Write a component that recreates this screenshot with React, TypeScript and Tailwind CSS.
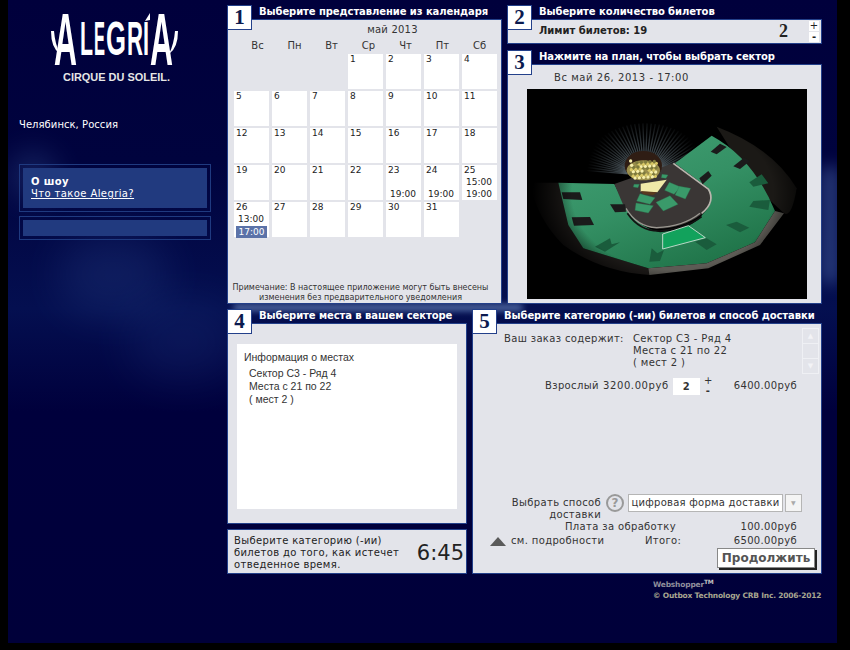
const verdana = "font-['DejaVu_Sans',sans-serif]";

const days = ['Вс', 'Пн', 'Вт', 'Ср', 'Чт', 'Пт', 'Сб'];

const cells: { day?: number; times?: string[]; selected?: boolean }[] = [
  {}, {}, {},
  { day: 1 }, { day: 2 }, { day: 3 }, { day: 4 },
  { day: 5 }, { day: 6 }, { day: 7 }, { day: 8 }, { day: 9 }, { day: 10 }, { day: 11 },
  { day: 12 }, { day: 13 }, { day: 14 }, { day: 15 }, { day: 16 }, { day: 17 }, { day: 18 },
  { day: 19 }, { day: 20 }, { day: 21 }, { day: 22 },
  { day: 23, times: ['', '19:00'] }, { day: 24, times: ['', '19:00'] }, { day: 25, times: ['15:00', '19:00'] },
  { day: 26, times: ['13:00', '17:00'], selected: true },
  { day: 27 }, { day: 28 }, { day: 29 }, { day: 30 }, { day: 31 },
];

const rays = Array.from({ length: 46 }, (_, i) => {
  const a = Math.PI * (1.03 + (i / 45) * 0.94);
  return {
    x1: 375 + Math.cos(a) * 50,
    y1: 270 + Math.sin(a) * 35,
    x2: 375 + Math.cos(a) * 190,
    y2: 270 + Math.sin(a) * 155,
  };
});

const speckles = Array.from({ length: 48 }, (_, i) => ({
  x: 332 + ((i * 37) % 80),
  y: 228 + ((i * 23) % 52),
  c: i % 3 === 0 ? '#f6efac' : i % 3 === 1 ? '#7d7a3d' : '#d8c866',
}));

// bold Liberation Sans advance widths at 50px, used to squeeze the logo letters
const logoLetters = [
  { ch: 'A', x: 5, w: 23, h: 53, base: 54, adv: 36.1 },
  { ch: 'L', x: 31, w: 13, h: 35, base: 44, adv: 30.5 },
  { ch: 'E', x: 45, w: 11, h: 35, base: 44, adv: 33.4 },
  { ch: 'G', x: 57, w: 20, h: 35, base: 44, adv: 38.9 },
  { ch: 'R', x: 78, w: 16, h: 35, base: 44, adv: 36.1 },
  { ch: 'I', x: 94, w: 6, h: 35, base: 44, adv: 13.9 },
  { ch: 'A', x: 101, w: 23, h: 53, base: 54, adv: 36.1 },
];

function Badge({ n }: { n: number }) {
  return (
    <div className="absolute left-0 top-0 z-10 flex h-[25px] w-[25px] items-center justify-center border border-[#23408a] bg-white font-['Liberation_Serif',serif] text-[21px] font-bold leading-none text-[#0b1a4f]">
      {n}
    </div>
  );
}

function Panel({ n, title, className, children }: { n: number; title: string; className: string; children: React.ReactNode }) {
  return (
    <section className={`relative flex flex-col ${className}`}>
      <Badge n={n} />
      <h2 className="ml-[32px] h-[14px] text-[10px] font-bold leading-[14px] -tracking-[0.08px] whitespace-nowrap text-white">{title}</h2>
      <div className="flex min-h-0 flex-1 flex-col border border-[#23408a] bg-[#e3e4ea] text-[#222]">{children}</div>
    </section>
  );
}

function StagePlan() {
  return (
    <svg viewBox="21 12 840 630" className="h-[210px] w-[280px] bg-black">
      <defs>
        <radialGradient id="vig" cx="52%" cy="50%" r="50%">
          <stop offset="0.72" stopColor="#000" stopOpacity="0" />
          <stop offset="1" stopColor="#000" stopOpacity="1" />
        </radialGradient>
        <radialGradient id="raysFade" gradientUnits="userSpaceOnUse" cx="375" cy="270" r="175">
          <stop offset="0.25" stopColor="#8ea2ae" stopOpacity="0.55" />
          <stop offset="1" stopColor="#8ea2ae" stopOpacity="0" />
        </radialGradient>
        <linearGradient id="seatGreen" x1="0.1" y1="0" x2="0.7" y2="1">
          <stop offset="0" stopColor="#42a074" />
          <stop offset="0.5" stopColor="#349064" />
          <stop offset="1" stopColor="#1f7348" />
        </linearGradient>
      </defs>
      {rays.map((r, i) => (
        <line key={i} x1={r.x1} y1={r.y1} x2={r.x2} y2={r.y2} stroke="url(#raysFade)" strokeWidth="4" />
      ))}
      <rect x="21" y="293" width="300" height="100" fill="#000" />
      <path d="M590 125 Q760 190 830 310 Q815 400 792 385 L700 300 Z" fill="#1b1916" />
      <path d="M30 293 L115 293 L190 490 L385 550 L388 570 Q240 560 130 480 Q50 400 30 293 Z" fill="#1d1a18" />
      <path d="M115 293 L283 297 L320 370 Q350 425 420 442 Q520 432 548 388 Q588 350 565 310 L465 235 L575 152 Q700 220 765 378 L705 472 L560 535 L385 550 L190 490 L145 420 Z" fill="url(#seatGreen)" />
      <path d="M765 378 L792 385 L720 480 L565 550 L388 570 L385 550 L560 535 L705 472 Z" fill="#5d5b55" />
      <path d="M283 297 L460 235 L565 310 Q590 350 545 388 Q490 430 410 432 Q345 420 312 365 Z" fill="#3a3635" />
      <path d="M460 235 L565 312 Q588 350 545 385" fill="none" stroke="#b9b6ae" strokeWidth="5" />
      <path d="M318 370 Q350 425 410 428 Q490 425 540 385" fill="none" stroke="#9a9790" strokeWidth="4" />
      <path d="M322 385 Q360 440 420 438 Q500 430 545 395" fill="none" stroke="#111" strokeWidth="5" />
      <path d="M428 447 L505 422 L556 458 L428 492 Z" fill="#12a25c" stroke="#d9e4dc" strokeWidth="2.5" />
      <g fill="#3a9a6a" stroke="#2a7650" strokeWidth="1">
        <path d="M360 326 L405 338 L390 358 L350 348 Z" />
        <path d="M348 354 L400 362 L385 384 L345 376 Z" />
        <path d="M408 352 L450 332 L474 358 L430 378 Z" />
        <path d="M448 292 L482 306 L462 328 L434 316 Z" />
        <path d="M478 304 L512 310 L496 342 L465 330 Z" />
        <path d="M342 298 L358 298 L354 308 L340 306 Z" />
        <path d="M426 268 L444 270 L438 280 L424 278 Z" />
      </g>
      <g fill="#1b1b1b">
        <path d="M125 322 L180 322 L187 345 L130 342 Z" />
        <path d="M155 397 L210 396 L222 420 L162 422 Z" />
        <path d="M270 358 L315 358 L318 380 L285 382 Z" />
        <path d="M572 200 L600 176 L620 186 L590 208 Z" />
        <path d="M640 244 L672 218 L690 228 L660 252 Z" />
        <path d="M538 280 L565 258 L575 272 L548 298 Z" />
      </g>
      <g fill="#1a5c3c">
        <path d="M225 485 L270 460 L275 478 L300 472 L255 500 Z" />
        <path d="M388 530 L395 490 L412 505 L432 495 L420 528 Z" />
        <path d="M525 470 L560 460 L590 478 L560 495 Z" />
        <path d="M618 420 L650 410 L688 428 L660 442 Z" />
        <path d="M688 365 L700 348 L750 345 L745 375 Z" />
        <path d="M688 292 L725 268 L745 295 L700 305 Z" />
      </g>
      <ellipse cx="370" cy="242" rx="56" ry="44" fill="#2f1d14" />
      <ellipse cx="370" cy="256" rx="50" ry="30" fill="#9a8e4c" />
      {speckles.map((s, i) => (
        <circle key={i} cx={s.x} cy={s.y} r="5" fill={s.c} />
      ))}
      <path d="M362 296 L440 284 L412 322 L362 320 Z" fill="#efe9a8" />
      <path d="M362 318 L412 322 L400 330 L370 328 Z" fill="#5a3a1f" />
      <rect x="21" y="12" width="840" height="630" fill="url(#vig)" />
    </svg>
  );
}

function Logo() {
  return (
    <svg viewBox="0 0 130 72" className="h-[72px] w-[130px]">
      {logoLetters.map((l, i) => (
        <text
          key={i}
          transform={`translate(${l.x} ${l.base}) scale(${l.w / l.adv} ${l.h / 35.8})`}
          fill="#fff"
          fontFamily="'Liberation Sans', sans-serif"
          fontWeight="700"
          fontSize="50"
        >
          {l.ch}
        </text>
      ))}
      <path d="M96 10 L101 2 L101 9 Z" fill="#fff" />
      <path d="M2 20 Q2 37 11 43 Q6 33 5 20 Z" fill="#fff" />
      <path d="M129 20 Q129 37 120 43 Q125 33 126 20 Z" fill="#fff" />
      <text x="14" y="70" textLength="107" lengthAdjust="spacingAndGlyphs" fill="#e6e6e6" fontFamily="'Liberation Sans', sans-serif" fontWeight="700" fontSize="10.5">
        CIRQUE DU SOLEIL.
      </text>
    </svg>
  );
}

export default function App() {
  return (
    <div className={`h-[650px] w-[850px] overflow-hidden bg-black ${verdana}`}>
      <div className="relative ml-[8px] flex h-[643px] w-[829px] overflow-hidden bg-[linear-gradient(180deg,#00003c_0%,#00033e_25%,#040f50_48%,#00003c_64%,#00003a_100%)]">
        {/* clouds behind everything */}
        <div className="absolute left-[0px] top-[150px] h-[50px] w-[50px] rounded-full bg-[#3b5a9a] opacity-30 blur-[14px]" />
        <div className="absolute left-[50px] top-[235px] h-[80px] w-[110px] rounded-full bg-[#2f4c92] opacity-25 blur-[20px]" />
        <div className="absolute left-[120px] top-[300px] h-[80px] w-[110px] rounded-full bg-[#2a4590] opacity-20 blur-[22px]" />
        <div className="absolute left-[812px] top-[165px] h-[120px] w-[20px] rounded-full bg-[#4a68a8] opacity-50 blur-[8px]" />
        <div className="absolute left-[225px] top-[304px] h-[7px] w-[290px] rounded-full bg-[#6f8ec4] opacity-70 blur-[3px]" />

        <aside className="relative w-[219px] shrink-0 pl-[11px] text-white">
          <div className="pl-[30px] pt-[11px]">
            <Logo />
          </div>
          <p className="mt-[36px] text-[10px] leading-[12px] tracking-[0.05px]">Челябинск, Россия</p>
          <div className="mt-[33px] w-[192px] border border-[#1f3a80] p-[3px]">
            <div className="h-[40px] bg-[#213a7f] px-[8px] pt-[8px] text-[10px] leading-[12px] tracking-[0.4px]">
              <p className="font-bold">О шоу</p>
              <a className="underline">Что такое Alegria?</a>
            </div>
          </div>
          <div className="mt-[4px] w-[192px] border border-[#1f3a80] p-[3px]">
            <div className="h-[16px] bg-[#213a7f]" />
          </div>
        </aside>

        <main className="relative flex w-[595px] flex-col pt-[5px]">
          <div className="flex gap-[5px]">
            <Panel n={1} title="Выберите представление из календаря" className="h-[299px] w-[275px]">
              <p className="mt-[4px] pl-[56px] text-center text-[10px] leading-[12px] tracking-[0.2px] text-[#333]">май 2013</p>
              <div className="mt-[3px] grid grid-cols-[repeat(7,37px)] pl-[11px]">
                {days.map((d) => (
                  <div key={d} className="h-[13px] text-center text-[10px] leading-[13px] text-[#333]">{d}</div>
                ))}
              </div>
              <div className="mt-[2px] grid grid-cols-[repeat(7,35px)] gap-x-[3px] gap-y-[2px] pl-[6px]">
                {cells.map((c, i) =>
                  c.day ? (
                    <div key={i} className="flex h-[35px] flex-col bg-white pl-[2px] text-[9px] leading-[11px] text-[#222]">
                      <span className="h-[11px]">{c.day}</span>
                      {c.times?.map((t, j) => (
                        <span
                          key={j}
                          className={
                            c.selected && j === 1
                              ? 'mt-[1px] h-[12px] w-[31px] bg-[#5b72a8] text-center leading-[12px] text-white'
                              : 'mt-[1px] h-[11px] pr-[3px] text-center text-[9px]'
                          }
                        >
                          {t}
                        </span>
                      ))}
                    </div>
                  ) : (
                    <div key={i} className="h-[35px]" />
                  ),
                )}
              </div>
              <p className="mt-auto pr-[8px] text-center text-[8px] leading-[10px] whitespace-nowrap text-[#333]">
                Примечание: В настоящее приложение могут быть внесены
                <br />
                изменения без предварительного уведомления
              </p>
            </Panel>

            <div className="flex w-[315px] flex-col gap-[6px]">
              <Panel n={2} title="Выберите количество билетов" className="h-[39px]">
                <div className="relative flex h-full items-center pl-[31px] text-[10px] font-bold leading-none">
                  <span className="mb-[1px]">Лимит билетов: 19</span>
                  <span className="absolute left-[271px] top-[1px] font-['Liberation_Serif',serif] text-[18px] leading-[20px]">2</span>
                  <div className="absolute left-[301px] top-[1px] flex w-[10px] flex-col gap-[1px] text-center text-[10px] font-normal leading-[10px]">
                    <span className="h-[10px] bg-white">+</span>
                    <span className="h-[10px] bg-white font-bold">-</span>
                  </div>
                </div>
              </Panel>
              <Panel n={3} title="Нажмите на план, чтобы выбрать сектор" className="h-[254px]">
                <p className="ml-[46px] mt-[7px] h-[12px] text-[10px] leading-[12px] tracking-[0.55px] text-[#333]">Вс май 26, 2013 - 17:00</p>
                <div className="ml-[19px] mt-[5px]">
                  <StagePlan />
                </div>
              </Panel>
            </div>
          </div>

          <div className="mt-[5px] flex gap-[5px]">
            <div className="flex w-[240px] flex-col gap-[5px]">
              <Panel n={4} title="Выберите места в вашем секторе" className="h-[215px]">
                <div className="mx-[9px] mt-[20px] h-[165px] bg-white px-[7px] pt-[7px] font-['Liberation_Sans',sans-serif] text-[10.5px] text-[#333]">
                  <p className="leading-[13px]">Информация о местах</p>
                  <div className="ml-[5px] mt-[3px] leading-[13px]">
                    <p>Сектор С3 - Ряд 4</p>
                    <p>Места с 21 по 22</p>
                    <p>( мест 2 )</p>
                  </div>
                </div>
              </Panel>
              <div className="flex h-[45px] items-center justify-between border border-[#23408a] bg-[#e3e4ea] pl-[6px] pr-[2px] pt-[3px] text-[#222]">
                <p className="text-[10px] leading-[12px] tracking-[0.35px] whitespace-nowrap">
                  Выберите категорию (-ии)
                  <br />
                  билетов до того, как истечет
                  <br />
                  отведенное время.
                </p>
                <span className="text-[21px] leading-none">6:45</span>
              </div>
            </div>

            <Panel n={5} title="Выберите категорию (-ии) билетов и способ доставки" className="h-[265px] w-[350px]">
              <div className="relative flex h-full flex-col text-[10px] leading-[12px] tracking-[0.35px] text-[#333]">
                <div className="ml-[31px] mt-[9px] flex">
                  <span className="w-[129px]">Ваш заказ содержит:</span>
                  <div>
                    <p>Сектор С3 - Ряд 4</p>
                    <p>Места с 21 по 22</p>
                    <p>( мест 2 )</p>
                  </div>
                </div>
                <div className="absolute left-[329px] top-[4px] flex h-[46px] w-[17px] flex-col border border-[#eff0f4] text-center text-[7px] leading-[15px] text-[#f3f3f6]">
                  <span className="h-[15px] border-b border-[#eff0f4]">▲</span>
                  <span className="h-[15px] border-b border-[#eff0f4]" />
                  <span className="h-[14px]">▼</span>
                </div>
                <div className="ml-[72px] mt-[7px] flex items-center">
                  <span className="w-[58px] whitespace-nowrap">Взрослый</span>
                  <span className="w-[70px] tracking-[0.6px] whitespace-nowrap">3200.00руб</span>
                  <span className="h-[17px] w-[27px] bg-white text-center font-bold leading-[17px]">2</span>
                  <div className="ml-[4px] flex w-[8px] flex-col text-center text-[10px] leading-[10px]">
                    <span>+</span>
                    <span className="font-bold">-</span>
                  </div>
                  <span className="ml-[19px] w-[66px] text-right whitespace-nowrap">6400.00руб</span>
                </div>

                <div className="mt-auto flex flex-col pb-[5px]">
                  <div className="flex h-[27px] items-start">
                    <p className="ml-[30px] w-[98px] pt-[3px] text-right">Выбрать способ доставки</p>
                    <span className="ml-[5px] flex h-[18px] w-[18px] items-center justify-center rounded-full border-2 border-[#999] text-[12px] font-bold leading-none tracking-normal text-[#999]">?</span>
                    <div className="ml-[4px] flex h-[18px] w-[155px] items-center justify-center border border-[#b5b5b5] bg-white text-[10px] tracking-[0.25px] whitespace-nowrap">цифровая форма доставки</div>
                    <div className="ml-[2px] flex h-[18px] w-[17px] items-center justify-center border border-[#b5b5b5] bg-[#f4f4f4] text-[6px] text-[#aaa]">▼</div>
                  </div>
                  <div className="flex h-[13px]">
                    <span className="ml-[92px] w-[166px] whitespace-nowrap">Плата за обработку</span>
                    <span className="w-[66px] text-right whitespace-nowrap">100.00руб</span>
                  </div>
                  <div className="flex h-[14px] items-center">
                    <svg viewBox="0 0 16 9" className="ml-[17px] h-[9px] w-[16px]">
                      <path d="M8 0 L16 9 L0 9 Z" fill="#5a5a5a" />
                    </svg>
                    <span className="ml-[5px] w-[134px] whitespace-nowrap">см. подробности</span>
                    <span className="w-[86px]">Итого:</span>
                    <span className="w-[66px] text-right whitespace-nowrap">6500.00руб</span>
                  </div>
                  <button className="ml-[244px] h-[20px] w-[98px] border border-[#888] bg-white text-[12px] font-bold leading-none tracking-normal text-[#555] shadow-[2px_2px_0_#222]">
                    Продолжить
                  </button>
                </div>
              </div>
            </Panel>
          </div>

          <div className="ml-[426px] mt-[5px] text-[7.5px] font-bold leading-[11px] -tracking-[0.2px] text-[#a8a690]">
            <p className="text-[#8f8f9c]">
              Webshopper<sup className="text-[6px] text-[#c4c4c4]">TM</sup>
            </p>
            <p className="whitespace-nowrap">© Outbox Technology CRB Inc. 2006-2012</p>
          </div>
        </main>
      </div>
    </div>
  );
}
